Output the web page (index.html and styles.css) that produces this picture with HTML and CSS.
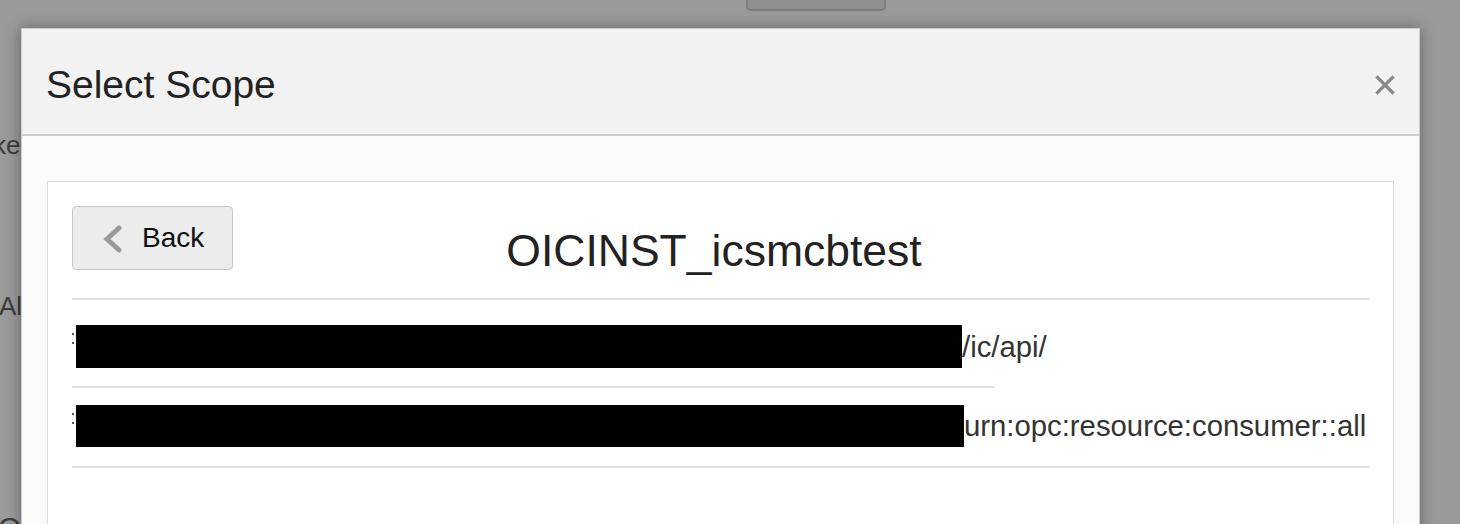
FILE: index.html
```html
<!DOCTYPE html>
<html>
<head>
<meta charset="utf-8">
<link rel="stylesheet" href="styles.css">
</head>
<body>
<div class="page">
  <div class="page-btn"></div>
  <div class="page-text t1">Make</div>
  <div class="page-text t2">Al</div>
  <div class="page-text t3">O</div>
</div>
<div class="dialog">
  <div class="dialog-header">
    <h1 class="dialog-title">Select Scope</h1>
    <button class="close" aria-label="Close">
      <svg width="20" height="20" viewBox="0 0 20 20"><path d="M2.5 2.5 L17.5 17.5 M17.5 2.5 L2.5 17.5" stroke="#8a8a8a" stroke-width="3.2" stroke-linecap="square" fill="none"/></svg>
    </button>
  </div>
  <div class="dialog-body">
    <div class="panel">
      <div class="panel-head">
        <button class="back">
          <svg width="22" height="28" viewBox="0 0 22 28"><polyline points="17,3 5,14 17,25" stroke="#9a9a9a" stroke-width="5" fill="none" stroke-linecap="round" stroke-linejoin="miter"/></svg>
          <span>Back</span>
        </button>
        <h2 class="instance">OICINST_icsmcbtest</h2>
      </div>
      <div class="row row-short">
        <span class="dots"><i></i><i></i></span>
        <span class="redact r1"></span>
        <span class="val">/ic/api/</span>
      </div>
      <div class="row row-2">
        <span class="dots"><i></i><i></i></span>
        <span class="redact r2"></span>
        <span class="val">urn:opc:resource:consumer::all</span>
      </div>
    </div>
  </div>
</div>
</body>
</html>
```

FILE: styles.css
```css
* { box-sizing: border-box; }
html, body {
  margin: 0;
  padding: 0;
  width: 1460px;
  height: 524px;
  overflow: hidden;
  background: #9a9a9a;
  font-family: "Liberation Sans", Arial, sans-serif;
}
.page {
  display: flex;
  flex-direction: column;
}
.page > * { flex-shrink: 0; }
.page-btn {
  margin-left: 746px;
  margin-top: -30px;
  width: 140px;
  height: 41px;
  border: 2px solid #7c7c7c;
  border-radius: 5px;
  background: #8f8f8f;
}
.page-text {
  font-size: 26px;
  color: #3c3c3c;
  line-height: 30px;
  white-space: nowrap;
}
.t1 { margin-left: -43px; margin-top: 119px; }
.t2 { margin-left: -1px; margin-top: 131px; }
.t3 { margin-left: -2px; margin-top: 192px; font-size: 30px; }

.dialog {
  position: absolute;
  left: 21px;
  top: 28px;
  width: 1399px;
  height: 520px;
  border: 1px solid #cdcdcd;
  border-bottom: none;
  background: #fafafa;
  box-shadow: 0 0 14px rgba(0,0,0,0.35);
}
.dialog-header {
  height: 107px;
  background: #f2f2f2;
  border-bottom: 2px solid #cdcdcd;
  display: flex;
  align-items: center;
  justify-content: space-between;
  padding: 6px 24px 0 24px;
}
.dialog-title {
  margin: 0;
  font-size: 39px;
  font-weight: normal;
  color: #222;
}
.close {
  border: none;
  background: none;
  padding: 0;
  width: 20px;
  height: 20px;
  display: block;
}
.close svg { display: block; }
.dialog-body {
  padding: 45px 25px 0 25px;
}
.panel {
  background: #fff;
  border: 1px solid #dcdcdc;
  border-bottom: none;
  padding: 24px 24px 0 24px;
  height: 400px;
}
.panel-head {
  display: grid;
  grid-template-columns: 1fr auto 1fr;
  align-items: start;
  height: 94px;
  border-bottom: 2px solid #e2e2e2;
}
.back {
  width: 161px;
  height: 64px;
  background: #ececec;
  border: 1px solid #c8c8c8;
  border-radius: 4px;
  display: flex;
  align-items: center;
  gap: 18px;
  padding: 0 0 0 29px;
  font-family: "Liberation Sans", Arial, sans-serif;
  font-size: 28px;
  color: #111;
}
.back svg { display: block; margin-top: 1px; flex-shrink: 0; }
.instance {
  margin: 20px 13px 0 0;
  font-size: 44.5px;
  font-weight: normal;
  color: #222;
  line-height: normal;
}
.row {
  display: flex;
  align-items: center;
  white-space: nowrap;
  border-bottom: 2px solid #e2e2e2;
  font-size: 29.3px;
  color: #333;
}
.row-short {
  width: 923px;
  padding: 25px 0 18px 0;
}
.row-2 {
  padding: 17px 0 19px 0;
}
.dots {
  display: flex;
  flex-direction: column;
  gap: 7px;
  align-self: flex-start;
  margin-top: 8px;
  width: 4px;
  flex-shrink: 0;
}
.dots i {
  display: block;
  width: 2px;
  height: 2px;
  background: #555;
}
.redact {
  display: block;
  background: #000;
  flex-shrink: 0;
}
.r1 { width: 886px; height: 43px; }
.r2 { width: 888px; height: 42px; }
.val { display: block; flex-shrink: 0; }
```
